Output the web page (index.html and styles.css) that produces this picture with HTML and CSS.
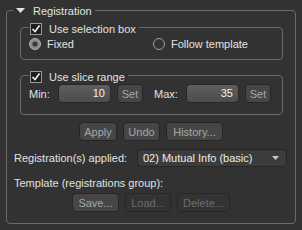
FILE: index.html
```html
<!DOCTYPE html>
<html lang="en">
<head>
    <meta charset="UTF-8">
    <title>Registration</title>
    <link rel="stylesheet" href="styles.css">
</head>
<body>
    <div class="group outer">
        <div class="legend outer-legend">
            <svg class="arrow" width="9" height="5" viewBox="0 0 9 5"><path d="M0 0H9L4.5 5Z" fill="#e0e0e0"/></svg>
            <span>Registration</span>
        </div>

        <div class="group inner sel-box">
            <div class="legend check-legend">
                <svg class="check" width="12" height="12" viewBox="0 0 12 12">
                    <rect x="0.5" y="0.5" width="11" height="11" fill="#1e1e1e" stroke="#9a9a9a"/>
                    <path d="M2.5 6 L5 8.5 L9.5 2.5" fill="none" stroke="#f0f0f0" stroke-width="1.6"/>
                </svg>
                <span>Use selection box</span>
            </div>
            <div class="radios">
                <span class="radio">
                    <svg width="12" height="12" viewBox="0 0 12 12">
                        <circle cx="6" cy="6" r="5.5" fill="#8a8a8a" stroke="#b0b0b0"/>
                        <circle cx="6" cy="6" r="2.6" fill="#3a3a3a"/>
                    </svg>
                    Fixed
                </span>
                <span class="radio follow">
                    <svg width="12" height="12" viewBox="0 0 12 12">
                        <circle cx="6" cy="6" r="5.5" fill="#323232" stroke="#a0a0a0"/>
                    </svg>
                    Follow template
                </span>
            </div>
        </div>

        <div class="group inner slice">
            <div class="legend check-legend">
                <svg class="check" width="12" height="12" viewBox="0 0 12 12">
                    <rect x="0.5" y="0.5" width="11" height="11" fill="#1e1e1e" stroke="#9a9a9a"/>
                    <path d="M2.5 6 L5 8.5 L9.5 2.5" fill="none" stroke="#f0f0f0" stroke-width="1.6"/>
                </svg>
                <span>Use slice range</span>
            </div>
            <div class="range">
                <span class="range-label min">Min:</span>
                <span class="spin">10</span>
                <button class="btn set">Set</button>
                <span class="range-label max">Max:</span>
                <span class="spin">35</span>
                <button class="btn set">Set</button>
            </div>
        </div>

        <div class="actions first">
            <button class="btn apply">Apply</button>
            <button class="btn undo">Undo</button>
            <button class="btn history">History...</button>
        </div>

        <div class="applied">
            <span class="applied-label">Registration(s) applied:</span>
            <div class="combo">
                <span>02) Mutual Info (basic)</span>
                <svg width="7" height="4" viewBox="0 0 7 4"><path d="M0 0H7L3.5 4Z" fill="#c8c8c8"/></svg>
            </div>
        </div>

        <div class="tmpl-label">Template (registrations group):</div>

        <div class="actions second">
            <button class="btn save">Save...</button>
            <button class="btn off load">Load...</button>
            <button class="btn off delete">Delete...</button>
        </div>
    </div>
</body>
</html>
```

FILE: styles.css
```css
body {
    margin: 0;
    background: #323232;
    color: #e2e2e2;
    font-family: 'Liberation Sans', Arial, sans-serif;
    font-size: 11px;
}
.group {
    position: relative;
    border: 1px solid #6b6b6b;
    border-radius: 4px;
}
.outer {
    margin: 10px 6px 0 6px;
    height: 214px;
    padding: 16px 0 0 0;
    box-sizing: border-box;
}
.inner {
    margin: 0 12px 0 13px;
}
.legend {
    position: absolute;
    top: -8px;
    display: flex;
    align-items: center;
    height: 15px;
    background: #323232;
    white-space: nowrap;
}
.outer-legend {
    left: 6px;
    padding: 0 3px;
}
.outer-legend .arrow {
    margin-right: 8px;
}
.check-legend {
    top: -7px;
    left: 8px;
    padding: 0 3px 0 1px;
}
.check-legend .check {
    margin-right: 7px;
}
.sel-box {
    height: 33px;
    box-sizing: border-box;
    padding: 10px 0 0 8px;
}
.radios {
    display: flex;
    align-items: center;
}
.radio {
    display: flex;
    align-items: center;
    gap: 6px;
}
.radio svg {
    flex: none;
}
.follow {
    margin-left: 79px;
}
.slice {
    margin-top: 15px;
    height: 40px;
    box-sizing: border-box;
    padding: 8px 0 0 8px;
}
.range {
    display: flex;
    align-items: center;
    height: 19px;
}
.range-label {
    width: 29px;
}
.range-label.max {
    width: 32px;
    margin-left: 11px;
}
.spin {
    width: 53px;
    height: 19px;
    box-sizing: border-box;
    padding: 0 5px;
    text-align: right;
    line-height: 17px;
    color: #f0f0f0;
    border: 1px solid #282828;
    border-radius: 4px;
    background: linear-gradient(#5e5e5e, #4c4c4c);
}
.btn {
    font-family: inherit;
    font-size: 11px;
    height: 19px;
    padding: 0;
    color: #a6a6a6;
    background: #464646;
    border: 1px solid #262626;
    border-radius: 4px;
}
.set {
    width: 26px;
    margin-left: 6px;
}
.actions {
    display: flex;
    justify-content: center;
    gap: 6px;
}
.actions.first {
    margin-top: 7px;
}
.apply { width: 38px; }
.undo { width: 37px; }
.history { width: 57px; }
.applied {
    display: flex;
    align-items: center;
    margin-top: 8px;
    padding-left: 7px;
}
.applied-label {
    width: 123px;
    white-space: nowrap;
}
.combo {
    display: flex;
    align-items: center;
    justify-content: space-between;
    width: 150px;
    height: 18px;
    box-sizing: border-box;
    padding: 0 7px 0 5px;
    color: #ececec;
    background: #3c3c3c;
    border: 1px solid #262626;
    border-radius: 4px;
}
.tmpl-label {
    margin-top: 8px;
    padding-left: 7px;
    height: 16px;
    line-height: 16px;
}
.actions.second {
    margin-top: 2px;
}
.save { width: 47px; }
.load { width: 46px; }
.delete { width: 53px; }
.btn.off {
    color: #6e6e6e;
    background: #333333;
    border-color: #272727;
}
```
